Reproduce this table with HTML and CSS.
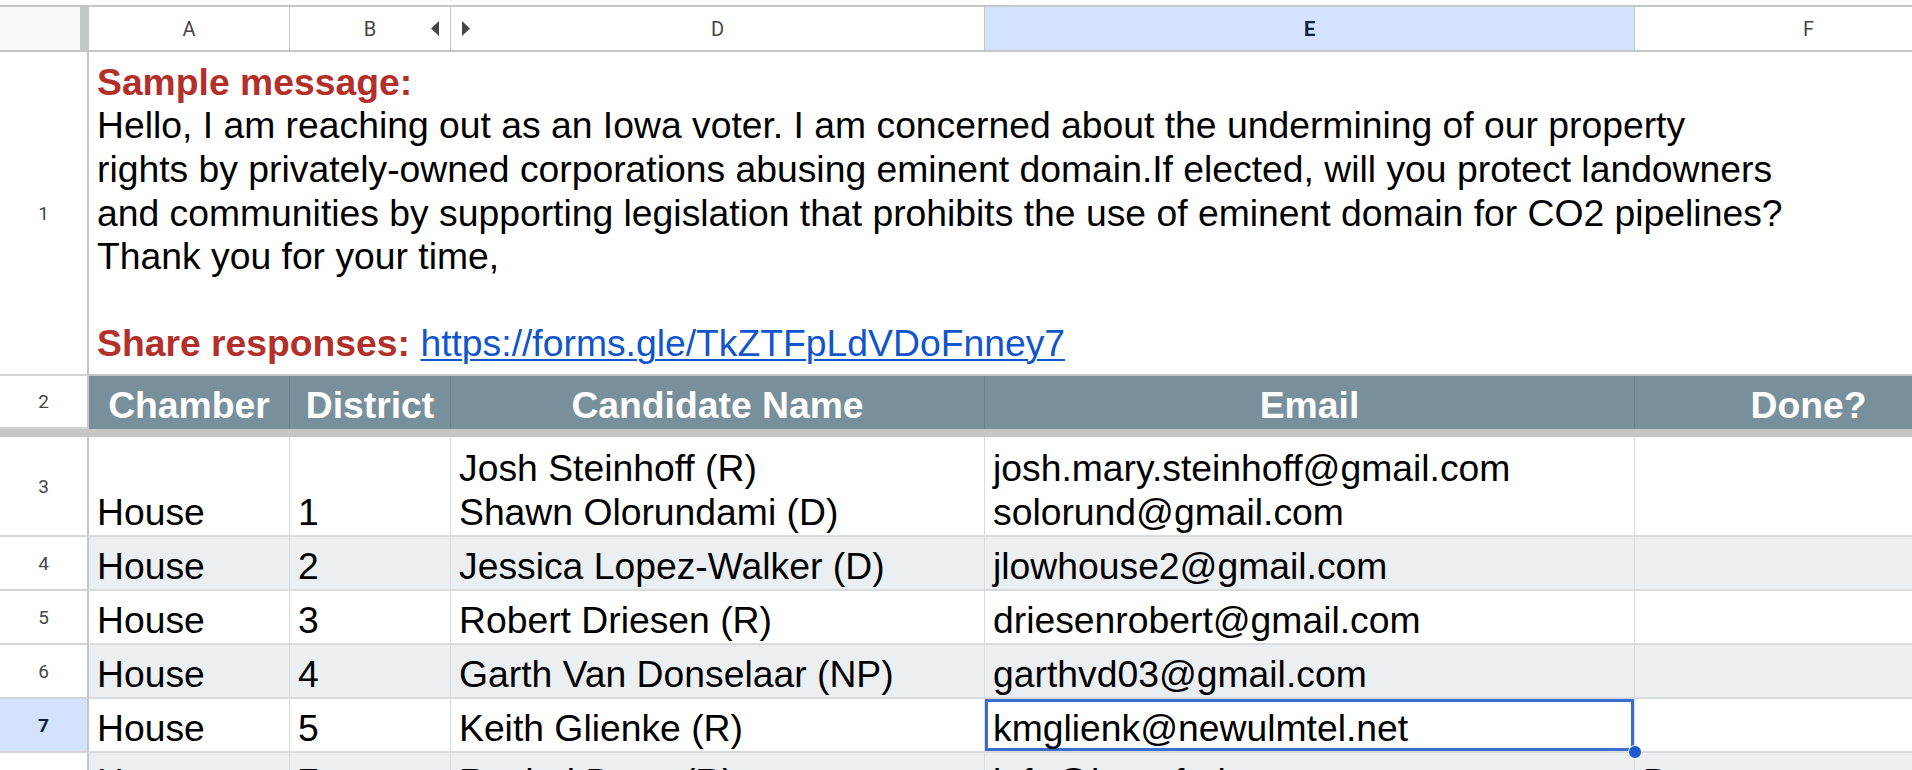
FILE: index.html
```html
<!DOCTYPE html>
<html>
<head>
<meta charset="utf-8">
<link rel="stylesheet" href="styles.css">
</head>
<body>
<div class="sheet">
  <div class="topgap"></div>
  <div class="row colhead">
    <div class="corner"></div>
    <div class="ch">A</div>
    <div class="ch ch-b">B
      <svg class="arr arr-l" width="8" height="15" viewBox="0 0 8 15"><path d="M8 0 L0 7.5 L8 15 Z" fill="#444746"/></svg>
    </div>
    <div class="ch ch-d">
      <svg class="arr arr-r" width="8" height="15" viewBox="0 0 8 15"><path d="M0 0 L8 7.5 L0 15 Z" fill="#444746"/></svg>
      D</div>
    <div class="ch ch-sel">E</div>
    <div class="ch">F</div>
  </div>

  <div class="row r1">
    <div class="rn">1</div>
    <div class="msg">
      <div class="line"><span class="red">Sample message:</span></div>
      <div class="line">Hello, I am reaching out as an Iowa voter. I am concerned about the undermining of our property</div>
      <div class="line">rights by privately-owned corporations abusing eminent domain.If elected, will you protect landowners</div>
      <div class="line">and communities by supporting legislation that prohibits the use of eminent domain for CO2 pipelines?</div>
      <div class="line">Thank you for your time,</div>
      <div class="line">&nbsp;</div>
      <div class="line"><span class="red">Share responses:</span> <a class="link" href="#">https://forms.gle/TkZTFpLdVDoFnney7</a></div>
    </div>
  </div>

  <div class="row r2">
    <div class="rn">2</div>
    <div class="hc">Chamber</div>
    <div class="hc">District</div>
    <div class="hc">Candidate Name</div>
    <div class="hc">Email</div>
    <div class="hc hc-right">Done?</div>
  </div>

  <div class="freeze"></div>

  <div class="row data tall">
    <div class="rn">3</div>
    <div class="c">House</div>
    <div class="c">1</div>
    <div class="c"><div>Josh Steinhoff (R)</div><div>Shawn Olorundami (D)</div></div>
    <div class="c"><div>josh.mary.steinhoff@gmail.com</div><div>solorund@gmail.com</div></div>
    <div class="c"></div>
  </div>
  <div class="row data alt">
    <div class="rn">4</div>
    <div class="c">House</div>
    <div class="c">2</div>
    <div class="c">Jessica Lopez-Walker (D)</div>
    <div class="c">jlowhouse2@gmail.com</div>
    <div class="c"></div>
  </div>
  <div class="row data">
    <div class="rn">5</div>
    <div class="c">House</div>
    <div class="c">3</div>
    <div class="c">Robert Driesen (R)</div>
    <div class="c">driesenrobert@gmail.com</div>
    <div class="c"></div>
  </div>
  <div class="row data alt">
    <div class="rn">6</div>
    <div class="c">House</div>
    <div class="c">4</div>
    <div class="c">Garth Van Donselaar (NP)</div>
    <div class="c">garthvd03@gmail.com</div>
    <div class="c"></div>
  </div>
  <div class="row data">
    <div class="rn rn-sel">7</div>
    <div class="c">House</div>
    <div class="c">5</div>
    <div class="c">Keith Glienke (R)</div>
    <div class="c c-sel">kmglienk@newulmtel.net<span class="handle"></span></div>
    <div class="c"></div>
  </div>
  <div class="row data alt">
    <div class="rn">8</div>
    <div class="c">House</div>
    <div class="c">7</div>
    <div class="c">Rachel Bunn (R)</div>
    <div class="c">info@bunnforiowa.com</div>
    <div class="c">Done</div>
  </div>
</div>
</body>
</html>
```

FILE: styles.css
```css
* { box-sizing: border-box; }

html, body {
  margin: 0;
  padding: 0;
  width: 1912px;
  height: 770px;
  overflow: hidden;
  background: #ffffff;
}

.sheet {
  width: 1983px;
  font-family: "Liberation Sans", Arial, sans-serif;
  color: #000;
}

.topgap {
  height: 5px;
  background: #ffffff;
}

.row {
  display: grid;
  grid-template-columns: 89px 201px 161px 534px 650px 348px;
}

/* column header */
.colhead {
  height: 47px;
  border-top: 2px solid #c4c7c5;
  border-bottom: 2px solid #c4c7c5;
}

.corner {
  background: #f8f9fa;
  border-right: 9px solid #c4c7c5;
}

.ch {
  position: relative;
  display: flex;
  align-items: center;
  justify-content: center;
  font-family: Roboto, "Liberation Sans", sans-serif;
  font-size: 20px;
  color: #444746;
  border-right: 1px solid #c4c7c5;
  background: #ffffff;
}

.ch-sel {
  background: #d3e3fd;
  color: #0b1f44;
  font-weight: 700;
}

.arr {
  position: absolute;
  top: 14px;
}

.arr-l { right: 11px; }
.arr-r { left: 11px; }

/* row numbers */
.rn {
  display: flex;
  align-items: center;
  justify-content: center;
  font-family: Roboto, "Liberation Sans", sans-serif;
  font-size: 19px;
  color: #444746;
  background: #ffffff;
  border-right: 2px solid #c4c7c5;
  border-bottom: 2px solid #d3d5d7;
}

.rn-sel {
  background: #d3e3fd;
  color: #0b1f44;
  font-weight: 700;
}

/* row 1 */
.r1 {
  height: 324px;
}

.msg {
  grid-column: 2 / 7;
  display: flex;
  flex-direction: column;
  justify-content: flex-end;
  padding: 0 0 8px 8px;
  font-size: 37.3px;
  line-height: 43.6px;
  white-space: nowrap;
  border-bottom: 2px solid #c4c7c5;
}

.red {
  color: #b3302a;
  font-weight: 700;
}

.link {
  color: #1155cc;
  text-decoration: underline;
  text-decoration-thickness: 2px;
  text-underline-offset: 3px;
}

/* row 2 header */
.r2 {
  height: 53px;
}

.hc {
  display: flex;
  align-items: flex-end;
  justify-content: center;
  padding-bottom: 2px;
  background: #78909c;
  color: #ffffff;
  font-weight: 700;
  font-size: 37.3px;
  line-height: 44px;
  border-right: 1px solid #6d818c;
  white-space: nowrap;
}

.freeze {
  height: 8px;
  background: #c4c7c5;
}

/* data rows */
.data {
  height: 54px;
}

.data.tall {
  height: 100px;
}

.c {
  display: flex;
  flex-direction: column;
  justify-content: flex-end;
  padding: 0 6px 1px 8px;
  font-size: 37.3px;
  line-height: 44px;
  white-space: nowrap;
  overflow: hidden;
  border-right: 1px solid #d9dbdd;
  border-bottom: 2px solid #d9dbdd;
  background: #ffffff;
}

.alt .c {
  background: #eceff1;
}

.c-sel {
  position: relative;
  z-index: 2;
  overflow: visible;
  box-shadow: inset 0 0 0 3px #3d6dcc;
}

.handle {
  position: absolute;
  right: -8px;
  bottom: -8px;
  width: 14px;
  height: 14px;
  border-radius: 50%;
  background: #1f5bd0;
  border: 1px solid #ffffff;
}
```
